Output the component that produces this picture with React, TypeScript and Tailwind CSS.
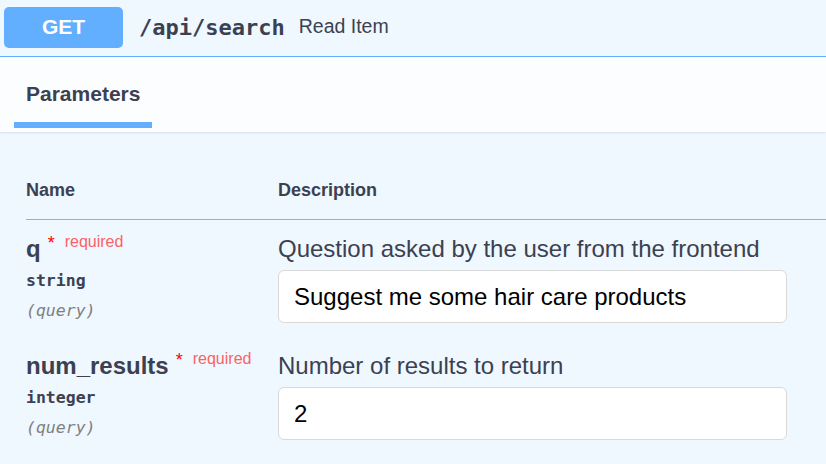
import React from "react"

const sans = "font-['Liberation_Sans',Arial,sans-serif]"
const mono = "font-['DejaVu_Sans_Mono','Liberation_Mono',monospace]"

type Param = {
  name: string
  type: string
  description: string
  value: string
}

const params: Param[] = [
  {
    name: "q",
    type: "string",
    description: "Question asked by the user from the frontend",
    value: "Suggest me some hair care products",
  },
  {
    name: "num_results",
    type: "integer",
    description: "Number of results to return",
    value: "2",
  },
]

export default function App() {
  return (
    <div className={`w-[826px] h-[464px] overflow-hidden bg-[#eff7ff] text-[#3b4151] ${sans}`}>
      {/* summary bar */}
      <div className="flex h-[57px] items-center border-b border-[#61affe] pb-[2px] pl-[4px]">
        <div className="flex h-[41px] w-[119px] items-center justify-center rounded-[5px] bg-[#61affe] text-[21px] font-bold text-white">
          GET
        </div>
        <span className={`ml-[16px] text-[22px] font-bold ${mono}`}>/api/search</span>
        <span className="ml-[14px] text-[19.5px]">Read Item</span>
      </div>

      {/* section header with tab */}
      <div className="relative z-10 h-[75px] bg-[#fcfdff] shadow-[0_1px_2px_rgba(0,0,0,0.1)]">
        <div className="ml-[14px] flex h-full w-[138px] flex-col">
          <div className="flex h-[65px] items-center pl-[12px] pt-[8px] text-[21px] font-bold">
            Parameters
          </div>
          <div className="h-[6px] bg-[#61affe]" />
        </div>
      </div>

      {/* table */}
      <div className="pl-[26px]">
        <div className="mt-[43px] flex h-[45px] items-center border-b border-[#a7adb7] pb-[14px] text-[18px] font-bold">
          <div className="w-[252px]">Name</div>
          <div>Description</div>
        </div>

        {params.map((p) => (
          <div key={p.name} className="flex pb-[14px] pt-[15px]">
            <div className="w-[252px] shrink-0">
              <div className="flex h-[28px] items-center whitespace-nowrap">
                <span className="text-[24px] font-bold">{p.name}</span>
                <span className="relative top-[-6px] ml-[7px] text-[18px] text-[#ff0000]">*</span>
                <span className="relative top-[-7px] ml-[10px] text-[16px] text-[#f96366]">required</span>
              </div>
              <div className={`mt-[6px] h-[24px] leading-[24px] text-[16.5px] font-bold ${mono}`}>
                {p.type}
              </div>
              <div className={`mt-[6px] h-[24px] leading-[24px] text-[16.5px] italic text-[#808080] ${mono}`}>
                (query)
              </div>
            </div>
            <div className="w-[509px]">
              <div className="h-[28px] leading-[28px] text-[24px]">{p.description}</div>
              <div className="mt-[7px] flex h-[53px] items-center rounded-[6px] border border-[#d9d9d9] bg-white pl-[15px] text-[24px] text-black">
                {p.value}
              </div>
            </div>
          </div>
        ))}
      </div>
    </div>
  )
}
